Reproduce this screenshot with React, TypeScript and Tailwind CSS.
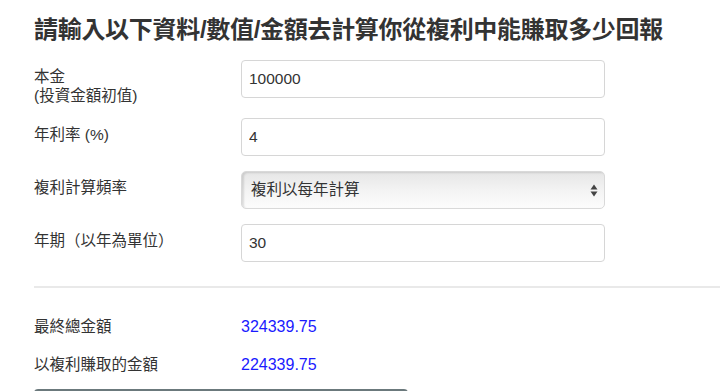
import React from "react";

const font = { fontFamily: '"Liberation Sans", "Noto Sans CJK TC", sans-serif' };

const Field = ({ label, value }: { label: string; value: string }) => (
  <input
    readOnly
    value={value}
    aria-label={label}
    className="h-[38px] w-[364px] rounded-[4px] border border-[#d6d6d6] bg-white px-[7px] text-[15.5px] text-[#333] outline-none"
    style={font}
  />
);

export default function App() {
  return (
    <div className="h-[391px] w-[720px] overflow-hidden bg-white pl-[34px] pt-[13px] text-[#333]" style={font}>
      <h1 className="text-[24px] font-bold leading-[34px] tracking-[-0.3px] text-[#333]">
        請輸入以下資料/數值/金額去計算你從複利中能賺取多少回報
      </h1>

      <div className="mt-[13px]">
        <div className="mb-[13px] flex items-start">
          <label className="w-[207px] pt-[7px] text-[15.5px] leading-[19px]">
            本金
            <br />
            (投資金額初值)
          </label>
          <Field label="本金" value="100000" />
        </div>

        <div className="mb-[15px] flex items-start">
          <label className="w-[207px] pt-[7px] text-[15.5px] leading-[19px]">年利率 (%)</label>
          <Field label="年利率" value="4" />
        </div>

        <div className="mb-[15px] flex items-start">
          <label className="w-[207px] pt-[7px] text-[15.5px] leading-[19px]">複利計算頻率</label>
          <div className="relative flex h-[38px] w-[364px] items-center rounded-[5px] border border-[#d9d9d9] bg-gradient-to-b from-[#e6e6e6] via-[#f3f3f3] to-[#fcfcfc] pl-[9px] shadow-[inset_2px_1px_2px_rgba(0,0,0,0.12)]">
            <span className="text-[15.5px] text-[#333]">複利以每年計算</span>
            <svg className="absolute right-[6px] top-[12px]" width="8" height="13" viewBox="0 0 8 13">
              <path d="M4 0.5 L7.5 5.5 L0.5 5.5 Z" fill="#444" />
              <path d="M4 12.5 L7.5 7.5 L0.5 7.5 Z" fill="#444" />
            </svg>
          </div>
        </div>

        <div className="flex items-start">
          <label className="w-[207px] pt-[7px] text-[15.5px] leading-[19px]">年期（以年為單位）</label>
          <Field label="年期" value="30" />
        </div>
      </div>

      <div className="mt-[24px] h-[2px] w-full bg-[#e9e9e9]" />

      <div className="mt-[29px] flex flex-col gap-[18px]">
        <div className="flex text-[15.5px] leading-[20px]">
          <span className="w-[207px]">最終總金額</span>
          <span className="text-[16px] text-[#1a1aff]">324339.75</span>
        </div>
        <div className="flex text-[15.5px] leading-[20px]">
          <span className="w-[207px]">以複利賺取的金額</span>
          <span className="text-[16px] text-[#1a1aff]">224339.75</span>
        </div>
      </div>

      <div className="mt-[14px] h-[30px] w-[374px] rounded-[4px] bg-[#6b797c]" />
    </div>
  );
}
